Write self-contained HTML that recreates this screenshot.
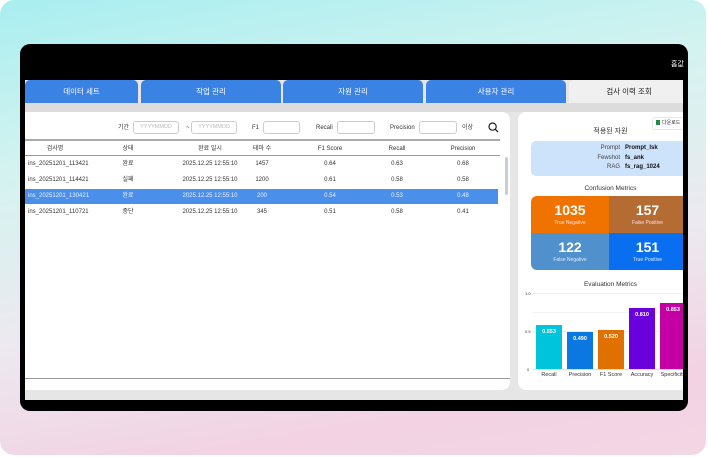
<!DOCTYPE html>
<html><head><meta charset="utf-8">
<style>
*{margin:0;padding:0;box-sizing:border-box}
body{width:708px;height:457px;overflow:hidden;font-family:"Liberation Sans","Noto Sans CJK KR",sans-serif;background:#fff;position:relative}
.bg{position:absolute;left:0;top:0;width:706px;height:455px;border-radius:14px;background:linear-gradient(170deg,#a9eef0 0%,#d4f3f0 30%,#ece9ef 60%,#f2d2e3 85%,#f3d6e4 100%)}
.dev{position:absolute;left:20px;top:44px;width:668px;height:367px;background:#000;border-radius:10px}
.scr{position:absolute;left:25px;top:80px;width:658px;height:320px;background:#e6e6e6;overflow:hidden}
.a{position:absolute}
.tab{position:absolute;top:0;height:23px;background:#3a82e4;border-radius:5px 5px 0 0;color:#fff;font-size:7.5px;text-align:center;line-height:23px}
.lp{position:absolute;left:0;top:32px;width:485px;height:278px;background:#fff;border-radius:0 8px 8px 0}
.rp{position:absolute;left:493px;top:32px;width:175px;height:278px;background:#fff;border-radius:8px}
.t{position:absolute;font-size:6px;line-height:8px;color:#333;white-space:nowrap}
.inp{position:absolute;height:13px;border:1px solid #ccc;border-radius:3px;font-size:5.5px;color:#bbb;line-height:11px;text-align:center}
.c{position:absolute;font-size:6px;line-height:8px;color:#333;text-align:center;width:60px;margin-left:-30px;white-space:nowrap}
.bar{position:absolute;bottom:0;width:26px;color:#fff;font-size:5.5px;font-weight:bold;text-align:center;padding-top:4px}
.w .t,.w .c{color:#eef}
</style></head><body>
<div class="bg"></div>
<div class="dev"></div>
<div class="t" style="left:671px;top:61px;color:#fff;font-size:7px">홈값</div>
<div class="scr">
 <div class="tab" style="left:0;width:113px">데이터 세트</div>
 <div class="tab" style="left:116px;width:140px">작업 관리</div>
 <div class="tab" style="left:258px;width:140px">자원 관리</div>
 <div class="tab" style="left:401px;width:140px">사용자 관리</div>
 <div class="tab" style="left:544px;width:120px;background:#f0f0f0;color:#222">검사 이력 조회</div>
 <div class="a" style="left:0;top:23px;width:658px;height:9px;background:#dcdcdc"></div>
 <div class="lp">
  <div class="t" style="left:93px;top:12px">기간</div>
  <div class="inp" style="left:108px;top:9px;width:46px">YYYYMMDD</div>
  <div class="t" style="left:161px;top:12px">~</div>
  <div class="inp" style="left:166px;top:9px;width:46px">YYYYMMDD</div>
  <div class="t" style="left:227px;top:12px">F1</div>
  <div class="inp" style="left:238px;top:9px;width:37px"></div>
  <div class="t" style="left:291px;top:12px">Recall</div>
  <div class="inp" style="left:312px;top:9px;width:38px"></div>
  <div class="t" style="left:365px;top:12px">Precision</div>
  <div class="inp" style="left:394px;top:9px;width:38px"></div>
  <div class="t" style="left:437px;top:12px">이상</div>
  <svg class="a" style="left:463px;top:10px" width="11" height="11" viewBox="0 0 11 11"><circle cx="4.6" cy="4.6" r="3.6" fill="none" stroke="#222" stroke-width="1.2"/><path d="M7.3 7.3L10 10" stroke="#222" stroke-width="1.3"/></svg>
  <div class="a" style="left:0;top:27px;width:475px;height:2px;background:#aaa"></div>
  <div class="c" style="left:30px;top:33px">검사명</div>
  <div class="c" style="left:103px;top:33px">상태</div>
  <div class="c" style="left:185px;top:33px">완료 일시</div>
  <div class="c" style="left:237px;top:33px">테마 수</div>
  <div class="c" style="left:305px;top:33px">F1 Score</div>
  <div class="c" style="left:372px;top:33px">Recall</div>
  <div class="c" style="left:438px;top:33px">Precision</div>
  <div class="a" style="left:0;top:43px;width:475px;height:1px;background:#999"></div>
  <div class="a" style="left:0;top:77px;width:473px;height:15px;background:#4a90ea"></div>
  <div class="a" style="left:480px;top:45px;width:3px;height:38px;background:#c8ccd4;border-radius:2px"></div>
  <div class="a" style="left:0;top:266px;width:485px;height:1px;background:#999"></div>

  <div class="t" style="left:3px;top:48px">ins_20251201_113421</div>
  <div class="c" style="left:103px;top:48px">완료</div><div class="c" style="left:185px;top:48px">2025.12.25 12:55:10</div><div class="c" style="left:237px;top:48px">1457</div><div class="c" style="left:305px;top:48px">0.64</div><div class="c" style="left:372px;top:48px">0.63</div><div class="c" style="left:438px;top:48px">0.68</div>
  <div class="t" style="left:3px;top:64px">ins_20251201_114421</div>
  <div class="c" style="left:103px;top:64px">실패</div><div class="c" style="left:185px;top:64px">2025.12.25 12:55:10</div><div class="c" style="left:237px;top:64px">1200</div><div class="c" style="left:305px;top:64px">0.61</div><div class="c" style="left:372px;top:64px">0.58</div><div class="c" style="left:438px;top:64px">0.58</div>
  <div class="w">
  <div class="t" style="left:3px;top:80px">ins_20251201_130421</div>
  <div class="c" style="left:103px;top:80px">완료</div><div class="c" style="left:185px;top:80px">2025.12.25 12:55:10</div><div class="c" style="left:237px;top:80px">200</div><div class="c" style="left:305px;top:80px">0.54</div><div class="c" style="left:372px;top:80px">0.53</div><div class="c" style="left:438px;top:80px">0.48</div>
  </div>
  <div class="t" style="left:3px;top:96px">ins_20251201_110721</div>
  <div class="c" style="left:103px;top:96px">중단</div><div class="c" style="left:185px;top:96px">2025.12.25 12:55:10</div><div class="c" style="left:237px;top:96px">345</div><div class="c" style="left:305px;top:96px">0.51</div><div class="c" style="left:372px;top:96px">0.58</div><div class="c" style="left:438px;top:96px">0.41</div>
 </div>
 <div class="rp">
  <div class="a" style="left:134px;top:5px;width:34px;height:13px;border:1px solid #e6e6e6;border-radius:3px;font-size:5px;line-height:11px;color:#333;padding-left:3px"><span style="display:inline-block;width:4px;height:5px;background:#1f8a4c;margin-right:2px;vertical-align:-1px"></span>다운로드</div>
  <div class="t" style="left:0;width:185px;text-align:center;top:15px;font-size:7px;line-height:9px">적용된 자원</div>
  <div class="a" style="left:13px;top:29px;width:165px;height:35px;background:#cde2fb;border-radius:5px"></div>
  <div class="t" style="left:76px;top:32px;width:26px;text-align:right;color:#444">Prompt</div><div class="t" style="left:107px;top:32px;font-weight:bold;color:#111">Prompt_lsk</div>
  <div class="t" style="left:76px;top:42px;width:26px;text-align:right;color:#444">Fewshot</div><div class="t" style="left:107px;top:42px;font-weight:bold;color:#111">fs_ank</div>
  <div class="t" style="left:76px;top:51px;width:26px;text-align:right;color:#444">RAG</div><div class="t" style="left:107px;top:51px;font-weight:bold;color:#111">fs_rag_1024</div>
  <div class="t" style="left:0;width:185px;text-align:center;top:73px;font-size:6.5px">Confusion Metrics</div>
  <div class="a" style="left:13px;top:84px;width:170px;height:74px;border-radius:6px;overflow:hidden">
   <div class="a" style="left:0;top:0;width:78px;height:37px;background:#f07300"></div>
   <div class="a" style="left:78px;top:0;width:92px;height:37px;background:#b46c32"></div>
   <div class="a" style="left:0;top:37px;width:78px;height:37px;background:#5090cc"></div>
   <div class="a" style="left:78px;top:37px;width:92px;height:37px;background:#0a6ef0"></div>
   <div class="t" style="left:0;width:78px;text-align:center;top:6px;font-size:14px;line-height:16px;font-weight:bold;color:#fff">1035</div>
   <div class="t" style="left:0;width:78px;text-align:center;top:23px;font-size:5px;color:#fde">True Negative</div>
   <div class="t" style="left:78px;width:77px;text-align:center;top:6px;font-size:14px;line-height:16px;font-weight:bold;color:#fff">157</div>
   <div class="t" style="left:78px;width:77px;text-align:center;top:23px;font-size:5px;color:#fde">False Positive</div>
   <div class="t" style="left:0;width:78px;text-align:center;top:43px;font-size:14px;line-height:16px;font-weight:bold;color:#fff">122</div>
   <div class="t" style="left:0;width:78px;text-align:center;top:60px;font-size:5px;color:#def">False Negative</div>
   <div class="t" style="left:78px;width:77px;text-align:center;top:43px;font-size:14px;line-height:16px;font-weight:bold;color:#fff">151</div>
   <div class="t" style="left:78px;width:77px;text-align:center;top:60px;font-size:5px;color:#def">True Positive</div>
  </div>
  <div class="t" style="left:0;width:185px;text-align:center;top:169px;font-size:6.5px">Evaluation Metrics</div>
  <div class="t" style="left:7px;top:178px;font-size:4px">1.0</div>
  <div class="t" style="left:7px;top:216px;font-size:4px">0.5</div>
  <div class="t" style="left:9px;top:254px;font-size:4px">0</div>
  <div class="a" style="left:15px;top:181px;width:160px;height:1px;background:#eee"></div>
  <div class="a" style="left:15px;top:200px;width:160px;height:1px;background:#f3f3f3"></div>
  <div class="a" style="left:15px;top:219px;width:160px;height:1px;background:#eee"></div>
  <div class="a" style="left:15px;top:257px;width:160px;height:1px;background:#ddd"></div>
  <div class="a" style="left:18px;top:181px;width:160px;height:76px">
   <div class="bar" style="left:0;height:44px;background:#00c4dc">0.553</div>
   <div class="bar" style="left:31px;height:37px;background:#0a78e0">0.490</div>
   <div class="bar" style="left:62px;height:39px;background:#e07000">0.520</div>
   <div class="bar" style="left:93px;height:61px;background:#6a00dc">0.810</div>
   <div class="bar" style="left:124px;height:66px;background:#c400a4">0.853</div>
  </div>
  <div class="t" style="left:18px;width:26px;text-align:center;top:259px;font-size:5.5px">Recall</div>
  <div class="t" style="left:49px;width:26px;text-align:center;top:259px;font-size:5.5px">Precision</div>
  <div class="t" style="left:80px;width:26px;text-align:center;top:259px;font-size:5.5px">F1 Score</div>
  <div class="t" style="left:111px;width:26px;text-align:center;top:259px;font-size:5.5px">Accuracy</div>
  <div class="t" style="left:142px;width:26px;text-align:center;top:259px;font-size:5.5px">Specificity</div>
 </div>
</div>
</body></html>
